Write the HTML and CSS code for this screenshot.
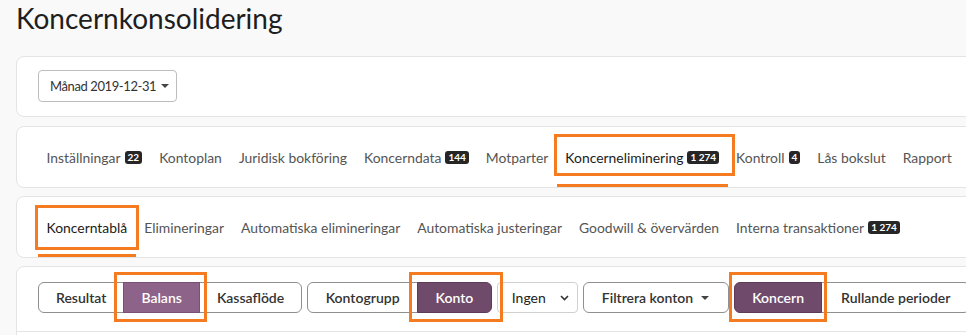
FILE: index.html
```html
<!DOCTYPE html>
<html lang="sv">
<head>
<meta charset="utf-8">
<title>Koncernkonsolidering</title>
<link rel="stylesheet" href="styles.css">
</head>
<body>
<div class="page">
  <h1 class="title">Koncernkonsolidering</h1>

  <section class="card period-card">
    <button class="dropdown">Månad 2019-12-31 <span class="caret"></span></button>
  </section>

  <nav class="card tabs">
    <a class="tab">Inställningar <span class="badge">22</span></a>
    <a class="tab">Kontoplan</a>
    <a class="tab">Juridisk bokföring</a>
    <a class="tab">Koncerndata <span class="badge">144</span></a>
    <a class="tab">Motparter</a>
    <a class="tab active">Koncerneliminering <span class="badge">1 274</span><span class="annot annot-tab1"></span></a>
    <a class="tab">Kontroll <span class="badge">4</span></a>
    <a class="tab">Lås bokslut</a>
    <a class="tab">Rapport</a>
  </nav>

  <nav class="card tabs">
    <a class="tab active">Koncerntablå<span class="annot annot-tab2"></span></a>
    <a class="tab">Elimineringar</a>
    <a class="tab">Automatiska elimineringar</a>
    <a class="tab">Automatiska justeringar</a>
    <a class="tab">Goodwill &amp; övervärden</a>
    <a class="tab">Interna transaktioner <span class="badge">1 274</span></a>
  </nav>

  <section class="card report-card">
    <div class="toolbar">
      <div class="btn-group">
        <button class="btn">Resultat</button>
        <button class="btn on light">Balans<span class="annot annot-balans"></span></button>
        <button class="btn">Kassaflöde</button>
      </div>
      <div class="btn-group wide">
        <button class="btn">Kontogrupp</button>
        <button class="btn on">Konto<span class="annot annot-konto"></span></button>
      </div>
      <div class="select">Ingen
        <svg class="chev" width="9" height="6" viewBox="0 0 9 6"><path d="M1 1l3.5 3.5L8 1" fill="none" stroke="#333" stroke-width="1.6"/></svg>
      </div>
      <button class="btn single">Filtrera konton <span class="caret"></span></button>
      <div class="btn-group">
        <button class="btn on">Koncern<span class="annot annot-koncern"></span></button>
        <button class="btn btn-last">Rullande perioder</button>
      </div>
    </div>
    <div class="report-body"></div>
  </section>
</div>
</body>
</html>
```

FILE: styles.css
```css
html, body {
  margin: 0;
  padding: 0;
  background: #f9f9f9;
  overflow: hidden;
}
body {
  font-family: "Lato", "Liberation Sans", sans-serif;
  color: #222;
}
.page {
  width: 1010px;
  padding-left: 16px;
}
.title {
  margin: 2px 0 22px;
  font-size: 28px;
  line-height: 32px;
  font-weight: 400;
  color: #1e1e1e;
}
.card {
  background: #fff;
  border: 1px solid #e4e4e4;
  border-radius: 8px;
  margin-bottom: 8px;
}
.period-card {
  padding: 13px 21px 14px;
  margin-bottom: 9px;
}
.dropdown {
  height: 32px;
  padding: 0 7px 0 11px;
  border: 1px solid #bdbdbd;
  border-radius: 4px;
  background: #fff;
  font: 13px "Lato", "Liberation Sans", sans-serif;
  letter-spacing: -0.4px;
  color: #333;
  display: inline-flex;
  align-items: center;
  gap: 5px;
}
.caret {
  display: inline-block;
  width: 0;
  height: 0;
  border-left: 4px solid transparent;
  border-right: 4px solid transparent;
  border-top: 4px solid #444;
}
.tabs {
  display: flex;
  height: 60px;
  padding-left: 21px;
}
.tab {
  position: relative;
  display: flex;
  align-items: center;
  padding: 0 8.5px;
  font-size: 13.9px;
  color: #555;
  white-space: nowrap;
  border-bottom: 3px solid transparent;
  border-top: 3px solid transparent;
}
.tab.active {
  color: #1c1c1c;
  border-bottom-color: #f47b20;
}
.badge {
  display: inline-block;
  margin-left: 4px;
  padding: 0 3px;
  height: 13px;
  line-height: 13px;
  border-radius: 3px;
  background: #262626;
  color: #fff;
  font-size: 10px;
  font-weight: 700;
}
.annot {
  position: absolute;
  border: 3px solid #f47b20;
  pointer-events: none;
  z-index: 2;
}
.annot-tab1 { left: -3px; right: -7px; top: 4px; bottom: 8px; }
.annot-tab2 { left: -3px; right: -3px; top: 5px; bottom: 4px; }
.annot-balans { left: -10px; right: -8px; top: -11px; bottom: -10px; }
.annot-konto { left: -9px; right: -12px; top: -11px; bottom: -10px; }
.annot-koncern { left: -6px; right: -6px; top: -11px; bottom: -10px; }

.report-card {
  height: 120px;
}
.toolbar {
  display: flex;
  gap: 5px;
  padding: 15px 21px 18px;
  border-bottom: 1px solid #e4e4e4;
}
.btn-group {
  display: flex;
}
.btn {
  position: relative;
  height: 31px;
  padding: 0 17px;
  border: 1px solid #8f8f8f;
  background: #fff;
  font: 600 14px "Lato", "Liberation Sans", sans-serif;
  color: #333;
  display: inline-flex;
  align-items: center;
  gap: 8px;
  white-space: nowrap;
}
.btn-group.wide .btn { padding: 0 17.5px; }
.btn-group .btn { border-radius: 0; }
.btn-group .btn + .btn { margin-left: -1px; }
.btn-group .btn:first-child { border-radius: 6px 0 0 6px; }
.btn-group .btn:last-child { border-radius: 0 6px 6px 0; }
.btn.single { border-radius: 6px; padding: 0 19px 0 18px; }
.btn.btn-last { padding: 0 19px; }
.btn.on {
  background: #704a6b;
  border-color: #5e3a59;
  color: #fff;
  z-index: 1;
}
.btn.on.light {
  background: #8e6389;
  border-color: #7a5075;
}
.select {
  width: 81px;
  box-sizing: border-box;
  height: 31px;
  padding: 0 8px 0 14px;
  border: 1px solid #d0d0d0;
  border-radius: 4px;
  background: #fff;
  font-size: 14px;
  color: #222;
  display: flex;
  align-items: center;
  justify-content: space-between;
}
.report-body {
  height: 40px;
}
```
